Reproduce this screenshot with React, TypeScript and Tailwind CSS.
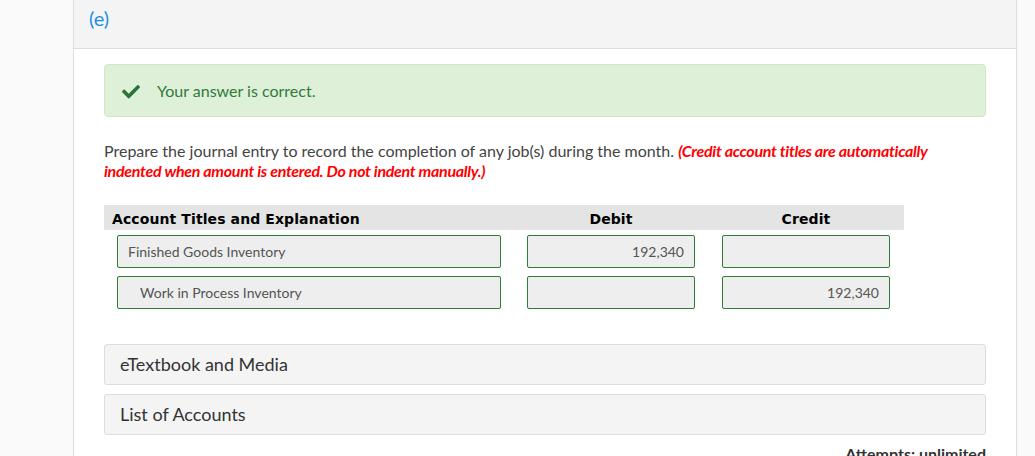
import React from 'react';

const rows = [
    { account: 'Finished Goods Inventory', debit: '192,340', credit: '', indent: false },
    { account: 'Work in Process Inventory', debit: '', credit: '192,340', indent: true },
];

const Field = ({ value, align = 'left', indent = false }: { value: string; align?: 'left' | 'right'; indent?: boolean }) => (
    <div
        className={`flex h-[33px] items-center rounded-[2px] border border-[#2e7d32] bg-[#eeeeee] text-[14px] text-[#555555] ${
            align === 'right' ? 'justify-end pr-[10px]' : indent ? 'pl-[22px]' : 'pl-[10px]'
        }`}
    >
        {value}
    </div>
);

const App = () => {
    return (
        <div className="flex h-[456px] w-full overflow-hidden bg-[#fafafa] font-['Lato','Liberation_Sans',sans-serif]">
            {/* columna izquierda */}
            <div className="w-[74px] shrink-0 border-r border-[#dddddd] bg-[#fafafa]" />

            <div className="flex w-[943px] shrink-0 flex-col border-r border-[#dddddd] bg-white">
                {/* cabecera */}
                <div className="h-[49px] shrink-0 border-b border-[#dddddd] bg-[#f4f4f4] pt-[7px] pl-[15px]">
                    <span className="text-[20px] leading-[22px] text-[#1a8fe3]">(e)</span>
                </div>

                <div className="shrink-0 px-[30px]">
                    {/* respuesta correcta */}
                    <div className="mt-[15px] flex h-[53px] items-center rounded-[4px] border border-[#cfe8c4] bg-[#dff0d8] pl-[17px]">
                        <svg width="18" height="15" viewBox="0 0 512 400" className="mt-[2px]">
                            <path
                                fill="#28743a"
                                d="M173.9 389.4L7.5 223c-10-10-10-26.2 0-36.2l36.2-36.2c10-10 26.2-10 36.2 0L192 262.7 432.1 22.5c10-10 26.2-10 36.2 0l36.2 36.2c10 10 10 26.2 0 36.2L210.1 389.4c-10 10-26.2 10-36.2 0z"
                            />
                        </svg>
                        <span className="ml-[17px] text-[16px] text-[#2f7a3b]">Your answer is correct.</span>
                    </div>

                    {/* enunciado */}
                    <p className="mt-[24px] w-[830px] text-[16px] leading-[20px] text-[#444444]">
                        Prepare the journal entry to record the completion of any job(s) during the month.{' '}
                        <span className="font-bold italic tracking-[-0.3px] text-[#ff0000]">
                            (Credit account titles are automatically indented when amount is entered. Do not indent manually.)
                        </span>
                    </p>

                    {/* tabla */}
                    <div className="mt-[24px] w-[800px]">
                        <div className="grid h-[25px] grid-cols-[410px_194px_196px] items-center bg-[#e4e4e4] pt-[3px] font-['DejaVu_Sans','Verdana',sans-serif] text-[14px] font-bold tracking-[0.1px] text-black">
                            <div className="pl-[8px]">Account Titles and Explanation</div>
                            <div className="text-center">Debit</div>
                            <div className="text-center">Credit</div>
                        </div>
                        <div className="mt-[5px] flex flex-col gap-[8px]">
                            {rows.map((row) => (
                                <div key={row.account} className="grid grid-cols-[410px_194px_196px]">
                                    <div className="px-[13px]">
                                        <Field value={row.account} indent={row.indent} />
                                    </div>
                                    <div className="px-[13px]">
                                        <Field value={row.debit} align="right" />
                                    </div>
                                    <div className="pr-[14px] pl-[14px]">
                                        <Field value={row.credit} align="right" />
                                    </div>
                                </div>
                            ))}
                        </div>
                    </div>

                    {/* acordeones */}
                    <div className="mt-[35px] flex flex-col gap-[9px]">
                        {['eTextbook and Media', 'List of Accounts'].map((title) => (
                            <div
                                key={title}
                                className="flex h-[41px] items-center rounded-[3px] border border-[#dddddd] bg-[#f4f4f4] pl-[15px] text-[18px] text-[#333333]"
                            >
                                {title}
                            </div>
                        ))}
                    </div>

                    <div className="mt-[7px] text-right text-[16px] font-bold text-[#333333]">Attempts: unlimited</div>
                </div>
            </div>

            <div className="flex-1 bg-[#fafafa]" />
        </div>
    );
};

export default App;
